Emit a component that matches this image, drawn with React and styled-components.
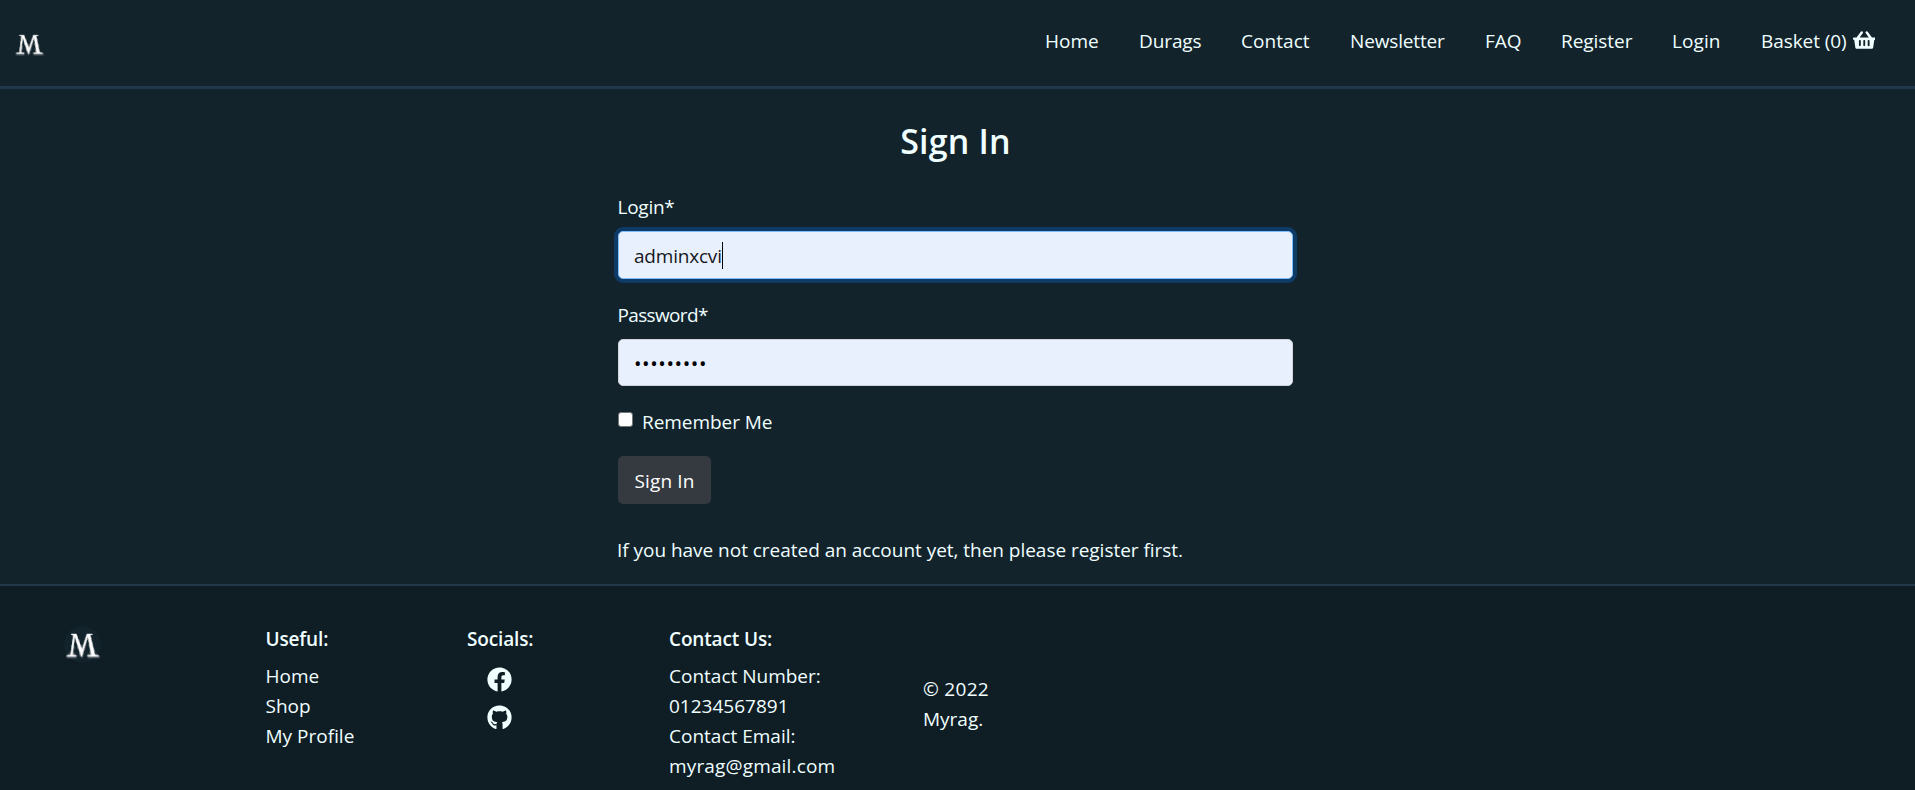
import React from "react";
import styled, { createGlobalStyle } from "styled-components";
import { FaShoppingBasket, FaFacebook, FaGithub } from "react-icons/fa";

const Global = createGlobalStyle`
  * { box-sizing: border-box; }
  html, body { margin: 0; background: #13232c; }
  body {
    overflow: hidden;
    color: azure;
    font-family: "Open Sans", "Noto Sans", sans-serif;
    font-size: 19px;
    line-height: 30px;
  }
`;

const Page = styled.div`
  display: flex;
  flex-direction: column;
  height: 790px;
`;

const Header = styled.header`
  display: flex;
  justify-content: space-between;
  align-items: flex-start;
  height: 89px;
  padding: 26px 40px 0 14px;
  border-bottom: 3px solid #21374a;
`;

const Logo = styled.div`
  display: flex;
  align-items: center;
  justify-content: center;
  flex: none;
  width: ${(p) => p.$size}px;
  height: ${(p) => p.$size}px;
  margin-top: ${(p) => p.$top}px;
  border-radius: 50%;
  background: #13232c;
  color: #fff;
  font-family: "Liberation Serif", serif;
  font-size: ${(p) => p.$font}px;
  font-style: italic;
  line-height: 1;
`;

const LogoLetter = styled.span`
  display: inline-block;
  -webkit-text-stroke: 0.35px #fff;
  transform: translate(-1px, -1px) perspective(42px) rotateX(38deg) scaleY(1.27) skewX(12deg);
`;

const Nav = styled.nav`
  display: flex;
`;

const NavLink = styled.a`
  width: ${(p) => p.$width}px;
  margin-left: 40px;
  white-space: nowrap;
  letter-spacing: ${(p) => p.$track || 0}px;
`;

const BasketLink = styled(NavLink)`
  display: flex;
  justify-content: space-between;

  svg {
    width: 22.5px;
    height: 20px;
    margin-top: 4px;
  }
`;

const Form = styled.form`
  flex: none;
  width: 1293px;
  height: 495px;
  padding: 31px 0 0 618px;
`;

const Title = styled.h2`
  margin: 0 0 30px;
  font-size: 34px;
  font-weight: 600;
  line-height: 42px;
  letter-spacing: 0.15px;
  text-align: center;
`;

const Label = styled.label`
  display: block;
  margin: 0 0 9px -0.5px;
  letter-spacing: ${(p) => p.$track}px;
`;

const Field = styled.div`
  display: flex;
  align-items: center;
  height: ${(p) => (p.$focused ? 48 : 47)}px;
  margin-bottom: ${(p) => (p.$focused ? 21 : 20)}px;
  padding: 2px 15px 0;
  border: 1px solid ${(p) => (p.$focused ? "#80bdff" : "#ced4da")};
  border-radius: 5px;
  background: #e8f0fe;
  box-shadow: ${(p) => (p.$focused ? "0 0 0 4px #0e3a66" : "none")};
  color: #16181b;
  letter-spacing: -0.2px;
`;

const Caret = styled.span`
  width: 1px;
  height: 27px;
  margin-bottom: 2px;
  background: #000;
`;

const Dots = styled.span`
  padding-top: 1px;
  color: #000;
  font-size: 20px;
  letter-spacing: 0.6px;
`;

const Remember = styled.div`
  display: flex;
  gap: 9px;
  margin-bottom: 19px;
  padding-top: 1px;
  letter-spacing: -0.05px;
`;

const Checkbox = styled.input`
  appearance: none;
  width: 15px;
  height: 15px;
  margin: 5px 0 0;
  border: 1px solid #767676;
  border-radius: 3px;
  background: #fff;
`;

const Submit = styled.button`
  display: block;
  width: 93px;
  height: 48px;
  margin: 0 0 31px;
  padding: 1px 0 0;
  border: 0;
  border-radius: 5px;
  background: #343a40;
  color: #fff;
  font: inherit;
  letter-spacing: 0.15px;
`;

const Hint = styled.p`
  margin: 0 0 0 -1px;
  white-space: nowrap;
  letter-spacing: -0.03px;
`;

const Footer = styled.footer`
  display: grid;
  grid-template-columns: 201.5px 201.5px 202px 254px 100px;
  flex: 1;
  padding: 38px 0 0 64px;
  border-top: 2px solid #21374a;
  background: #0f1d25;
`;

const Column = styled.div`
  display: flex;
  flex-direction: column;
  padding-top: ${(p) => p.$top || 0}px;
`;

const Heading = styled.strong`
  margin-bottom: 7px;
  font-weight: 600;
  letter-spacing: -0.15px;
`;

const Line = styled.span`
  white-space: nowrap;
  letter-spacing: ${(p) => p.$track || 0}px;
`;

const Socials = styled.div`
  display: flex;
  flex-direction: column;
  gap: 13px;
  padding: 6px 0 0 20px;
  font-size: 25px;
  line-height: 0;
`;

export default function App() {
  return (
    <Page>
      <Global />
      <Header>
        <Logo $size={32} $top={2} $font={28}>
          <LogoLetter>M</LogoLetter>
        </Logo>
        <Nav>
          <NavLink $width={54}>Home</NavLink>
          <NavLink $width={62} $track={-0.1}>Durags</NavLink>
          <NavLink $width={69} $track={0.05}>Contact</NavLink>
          <NavLink $width={95} $track={-0.15}>Newsletter</NavLink>
          <NavLink $width={36}>FAQ</NavLink>
          <NavLink $width={71} $track={-0.05}>Register</NavLink>
          <NavLink $width={49} $track={0.1}>Login</NavLink>
          <BasketLink $width={114} $track={-0.08}>
            Basket (0)
            <FaShoppingBasket />
          </BasketLink>
        </Nav>
      </Header>
      <Form>
        <Title>Sign In</Title>
        <Label $track={-0.25}>Login*</Label>
        <Field $focused>
          adminxcvi
          <Caret />
        </Field>
        <Label $track={-0.65}>Password*</Label>
        <Field>
          <Dots>•••••••••</Dots>
        </Field>
        <Remember>
          <Checkbox type="checkbox" />
          Remember Me
        </Remember>
        <Submit type="button">Sign In</Submit>
        <Hint>If you have not created an account yet, then please register first.</Hint>
      </Form>
      <Footer>
        <Logo $size={37} $top={2} $font={33}>
          <LogoLetter>M</LogoLetter>
        </Logo>
        <Column>
          <Heading>Useful:</Heading>
          <Line>Home</Line>
          <Line>Shop</Line>
          <Line>My Profile</Line>
        </Column>
        <Column>
          <Heading>Socials:</Heading>
          <Socials>
            <FaFacebook />
            <FaGithub />
          </Socials>
        </Column>
        <Column>
          <Heading>Contact Us:</Heading>
          <Line>Contact Number:</Line>
          <Line>01234567891</Line>
          <Line>Contact Email:</Line>
          <Line $track={0.15}>myrag@gmail.com</Line>
        </Column>
        <Column $top={50}>
          <Line $track={0.3}>© 2022</Line>
          <Line>Myrag.</Line>
        </Column>
      </Footer>
    </Page>
  );
}
